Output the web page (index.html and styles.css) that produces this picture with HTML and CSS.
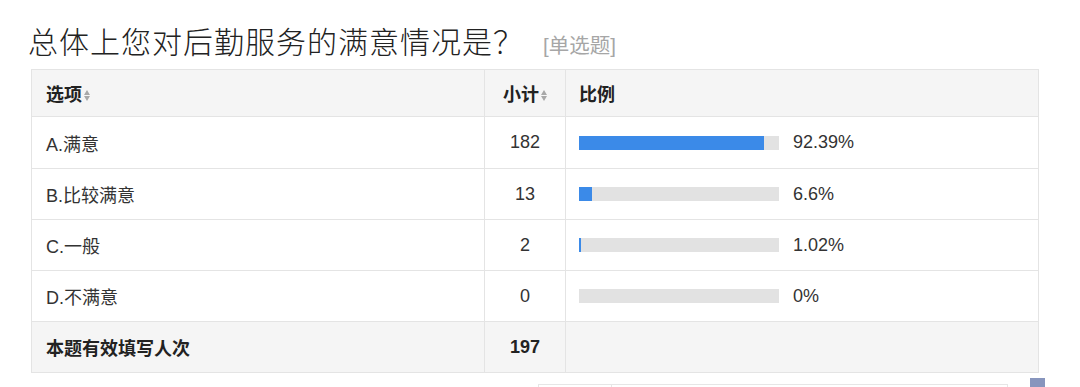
FILE: index.html
```html
<!DOCTYPE html>
<html lang="zh">
<head>
<meta charset="utf-8">
<link rel="stylesheet" href="styles.css">
</head>
<body>
<div class="page">
  <div class="title-row">
    <h1 class="title">总体上您对后勤服务的满意情况是？</h1>
    <span class="qtype">[单选题]</span>
  </div>
  <table class="stats">
    <colgroup>
      <col class="c-opt">
      <col class="c-cnt">
      <col class="c-pct">
    </colgroup>
    <thead>
      <tr>
        <th class="opt">选项<span class="sort"><i class="up"></i><i class="down"></i></span></th>
        <th class="cnt">小计<span class="sort"><i class="up"></i><i class="down"></i></span></th>
        <th class="pct">比例</th>
      </tr>
    </thead>
    <tbody>
      <tr>
        <td class="opt">A.满意</td>
        <td class="cnt">182</td>
        <td class="pct"><div class="bar-wrap"><div class="bar"><div class="fill" style="width:92.39%"></div></div><span class="pv">92.39%</span></div></td>
      </tr>
      <tr>
        <td class="opt">B.比较满意</td>
        <td class="cnt">13</td>
        <td class="pct"><div class="bar-wrap"><div class="bar"><div class="fill" style="width:6.6%"></div></div><span class="pv">6.6%</span></div></td>
      </tr>
      <tr>
        <td class="opt">C.一般</td>
        <td class="cnt">2</td>
        <td class="pct"><div class="bar-wrap"><div class="bar"><div class="fill" style="width:1.02%"></div></div><span class="pv">1.02%</span></div></td>
      </tr>
      <tr>
        <td class="opt">D.不满意</td>
        <td class="cnt">0</td>
        <td class="pct"><div class="bar-wrap"><div class="bar"><div class="fill" style="width:0%"></div></div><span class="pv">0%</span></div></td>
      </tr>
    </tbody>
    <tfoot>
      <tr>
        <td class="opt">本题有效填写人次</td>
        <td class="cnt">197</td>
        <td class="pct"></td>
      </tr>
    </tfoot>
  </table>
  <div class="below">
    <div class="tabs">
      <span class="tab first"></span>
      <span class="tab rest"></span>
    </div>
    <span class="chip"></span>
  </div>
</div>
</body>
</html>
```
FILE: styles.css
```css
html, body {
  margin: 0;
  padding: 0;
  background: #ffffff;
}
body {
  font-family: "Liberation Sans", "Noto Sans CJK SC", sans-serif;
  color: #333333;
  overflow: hidden;
}
.page {
  padding: 20px 0 0 31px;
  width: 1007px;
}
.title-row {
  display: flex;
  align-items: baseline;
  height: 49px;
}
.title {
  margin: 0;
  font-family: "Noto Sans CJK SC", sans-serif;
  font-weight: 300;
  font-size: 30px;
  letter-spacing: 1px;
  line-height: 40px;
  color: #222222;
  margin-left: -3px;
}
.qtype {
  margin-left: 19px;
  font-size: 20.5px;
  color: #a6a6a6;
  font-family: "Liberation Sans", "Noto Sans CJK SC", sans-serif;
}
.stats {
  border-collapse: collapse;
  width: 1007px;
  table-layout: fixed;
  border: 1px solid #e4e4e4;
}
.c-opt { width: 453px; }
.c-cnt { width: 81px; }
.c-pct { width: 473px; }
.stats th, .stats td {
  border: 1px solid #e4e4e4;
  padding: 0 14px;
  text-align: left;
  font-size: 18px;
}
.stats .pct {
  padding-left: 13px;
}
.stats thead th {
  height: 46px;
  background: #f5f5f5;
  font-weight: bold;
  color: #222222;
}
.stats tbody td {
  height: 50px;
  color: #333333;
}
.stats tbody tr:first-child td {
  height: 51px;
}
.stats tfoot td {
  height: 50px;
  background: #f5f5f5;
  font-weight: bold;
  color: #222222;
}
.stats .cnt {
  text-align: center;
  padding: 0;
}
.sort {
  display: inline-flex;
  flex-direction: column;
  vertical-align: middle;
  margin-left: 2px;
  gap: 1px;
  position: relative;
  top: -1px;
}
.sort i {
  display: block;
  width: 0;
  height: 0;
  border-left: 3.5px solid transparent;
  border-right: 3.5px solid transparent;
}
.sort .up { border-bottom: 5px solid #a8a8a8; }
.sort .down { border-top: 5px solid #a8a8a8; }
.bar-wrap {
  display: flex;
  align-items: center;
}
.bar {
  width: 200px;
  height: 14px;
  background: #e2e2e2;
  flex: none;
}
.fill {
  height: 100%;
  background: #3b8ae8;
}
.pv {
  margin-left: 14px;
}
.below {
  display: flex;
  justify-content: flex-end;
  align-items: flex-start;
  margin-top: 5px;
}
.tabs {
  display: flex;
  margin-top: 6px;
  margin-right: 22px;
}
.tab {
  height: 4px;
  border-top: 1px solid #e6e6e6;
  border-left: 1px solid #e6e6e6;
}
.tab.first { width: 72px; }
.tab.rest { width: 395px; border-right: 1px solid #e6e6e6; }
.chip {
  width: 15px;
  height: 12px;
  background: #8795bd;
  margin-right: -7px;
}
```
